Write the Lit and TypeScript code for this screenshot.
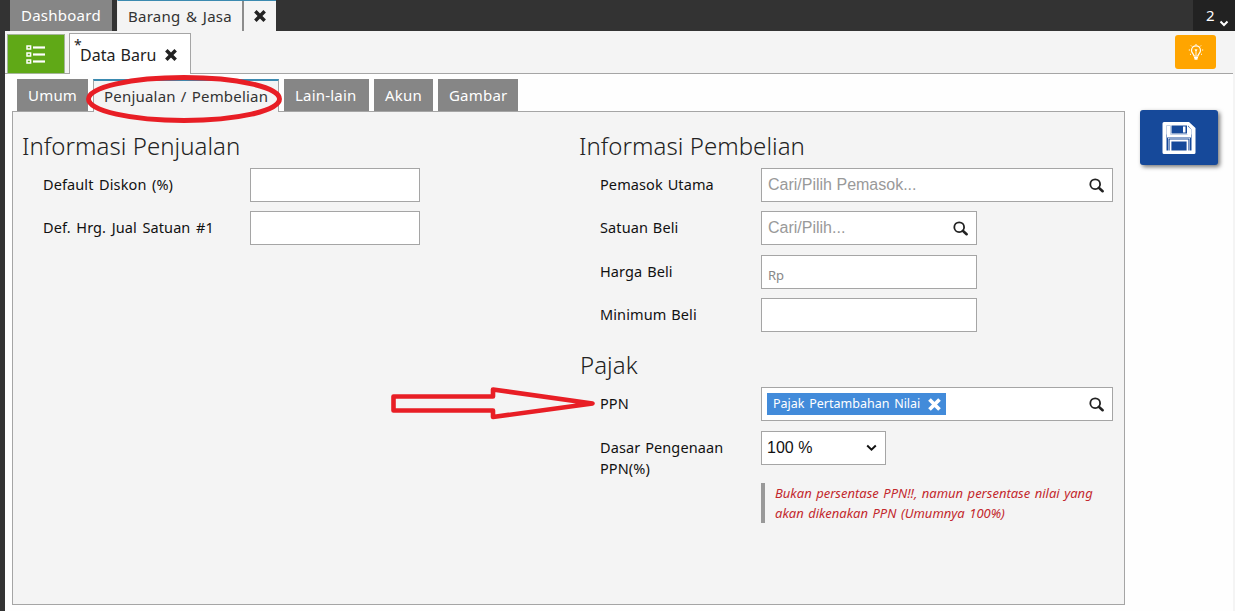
import { LitElement, html, css, svg } from "lit";
import { customElement } from "lit/decorators.js";

const searchIcon = html`<svg class="search" width="15" height="15" viewBox="0 0 15 15">
  <circle cx="6.2" cy="6.2" r="4.9" fill="none" stroke="#222" stroke-width="1.8" />
  <path d="M9.8 9.8 L13.6 13.2" stroke="#222" stroke-width="2.6" stroke-linecap="round" />
</svg>`;

const cross = (size: number, color: string) => html`<svg width=${size} height=${size} viewBox="0 0 12 12">
  <path d="M2 2 L10 10 M10 2 L2 10" stroke=${color} stroke-width="3" />
</svg>`;

@customElement("app-root")
export class AppRoot extends LitElement {
  static styles = css`
    :host {
      display: flex;
      flex-direction: column;
      position: relative;
      width: 1235px;
      height: 611px;
      overflow: hidden;
      background: #fefefe;
      color: #222;
      font: 15px/20px "Noto Sans", "Open Sans", sans-serif;
      white-space: nowrap;
    }
    * { box-sizing: border-box; }
    svg { display: block; flex: none; }
    .topbar { display: flex; height: 31px; background: #333; padding-left: 10px; flex: none; }
    .dash { width: 102px; background: #868686; color: #fff; padding: 5px 0 0 11px; letter-spacing: 0.25px; }
    .module { display: flex; width: 159px; margin-left: 5px; background: #f4f4f4; border-top: 1px solid #3b8ab0; border-left: 1px solid #eee; color: #333; }
    .module-name { width: 126px; padding: 5px 0 0 10px; border-right: 2px solid #8c8c8c; letter-spacing: 0.25px; word-spacing: 1.4px; }
    .module-close { display: flex; flex: 1; align-items: center; justify-content: center; }
    .count { display: flex; width: 42px; margin-left: auto; background: #222; color: #fff; padding: 5px 0 0 13px; }
    .count svg { margin: 15px 0 0 4px; }
    .body { display: flex; flex-direction: column; flex: 1; border-left: 5px solid #333; border-right: 2px solid #f4f4f4; }
    .docbar { display: flex; height: 43px; background: #f4f4f4; border-bottom: 1px solid #a5a5a5; padding-left: 2px; flex: none; }
    .list { display: flex; width: 58px; height: 40px; margin-top: 3px; background: #60a917; border: 1px solid #a5b59a; align-items: center; justify-content: center; }
    .doc { display: flex; position: relative; width: 122px; height: 41px; margin: 2px 0 0 4px; border: 1px solid #a5a5a5; border-bottom: 0; background: #fff; font-size: 16px; padding: 11px 0 0 10px; word-spacing: 1px; }
    .doc svg { margin: 3px 0 0 8px; }
    .star { position: absolute; left: 4px; top: 1px; font-size: 14px; }
    .tip { display: flex; width: 41px; height: 34px; margin: 4px 17px 0 auto; background: #ffa500; border-radius: 3px; align-items: center; justify-content: center; }
    .tabs { display: flex; gap: 5px; height: 37px; padding: 5px 0 0 12px; flex: none; color: #fff; }
    .tab { height: 32px; background: #868686; padding: 6px 0 0 11px; letter-spacing: 0.2px; }
    .umum { width: 71px; }
    .lain { width: 85px; }
    .akun { width: 59px; }
    .gambar { width: 80px; }
    .current { width: 186px; height: 33px; background: #f4f4f4; color: #333; border: 1px solid #a5a5a5; border-top: 2px solid #3b8ab0; border-bottom: 0; padding: 5px 0 0 10px; z-index: 1; word-spacing: 1px; }
    .content { display: flex; align-items: flex-start; }
    .panel { display: grid; grid-template-columns: 557px 1fr; width: 1113px; height: 494px; margin-left: 7px; border: 1px solid #a5a5a5; background: #f4f4f4; padding: 18px 0 0 10px; }
    .save { display: flex; width: 78px; height: 55px; margin: -1px 0 0 15px; border-radius: 3px; background: #16499a; box-shadow: 2px 2px 4px #777; align-items: center; justify-content: center; }
    h2 { margin: 0 0 0 -1px; height: 38px; font-size: 24px; line-height: 32px; font-weight: 300; color: #222; letter-spacing: 0.05px; }
    .row { display: flex; height: 34px; margin-bottom: 9.4px; padding-left: 20px; color: #111; }
    .label { padding-top: 6px; width: 161px; font-size: 14.5px; flex: none; letter-spacing: 0.1px; word-spacing: 1px; }
    .sales .label { width: 207px; word-spacing: 1.7px; }
    .field { display: flex; align-items: center; justify-content: space-between; height: 34px; border: 1px solid #a5a5a5; background: #fff; padding: 0 8px 0 6px; font: 16px/20px "Liberation Sans", sans-serif; color: #999; }
    .w170 { width: 170px; }
    .w216 { width: 216px; }
    .w352 { width: 352px; }
    .w125 { width: 125px; padding-left: 5px; color: #111; }
    .rp { font: 13px/20px "Noto Sans", sans-serif; padding-top: 7px; color: #888; }
    .tax { margin: 17px 0 0 0; }
    .chip { display: flex; width: 179px; height: 22px; align-items: center; background: #428bda; color: #fff; font: 12.5px/20px "Noto Sans", sans-serif; padding: 0 4px 0 6px; justify-content: space-between; margin-left: -1px; word-spacing: 1.5px; }
    .two { line-height: 21px; }
    .note { margin: 18px 0 0 181px; width: 345px; height: 40px; border-left: 4px solid #999; padding-left: 10px; color: #c3282d; font-size: 13px; font-style: italic; word-spacing: 1.1px; }
    .marks { position: absolute; left: 0; top: 0; pointer-events: none; z-index: 2; }
  `;

  private field(label: string, width: string, value: unknown = "", search = false) {
    return html`<div class="row"><div class="label">${label}</div>
      <div class="field ${width}"><span>${value}</span>${search ? searchIcon : ""}</div></div>`;
  }

  render() {
    return html`
      <div class="topbar">
        <div class="dash">Dashboard</div>
        <div class="module"><div class="module-name">Barang &amp; Jasa</div><div class="module-close">${cross(14, "#222")}</div></div>
        <div class="count">2<svg width="10" height="8" viewBox="0 0 10 8"><path d="M1.5 1.5 L5 5 L8.5 1.5" fill="none" stroke="#fff" stroke-width="2" /></svg></div>
      </div>
      <div class="body">
        <div class="docbar">
          <div class="list"><svg width="20" height="19" viewBox="0 0 20 19">
            ${[0, 7, 14].map((y) => svg`<rect x="1" y=${y + 1} width="3.6" height="3" fill="none" stroke="#fff" stroke-width="1.5" /><path d=${`M7 ${y + 2.5} H19`} stroke="#fff" stroke-width="2.2" />`)}
          </svg></div>
          <div class="doc"><span class="star">*</span>Data Baru${cross(14, "#222")}</div>
          <div class="tip"><svg width="16" height="17" viewBox="0 0 16 17" fill="none" stroke="#fff">
            <path d="M6 12 C6 10 3.5 9 3.5 6.4 A4.5 4.5 0 0 1 12.5 6.4 C12.5 9 10 10 10 12 Z" stroke-width="1.2" />
            <path d="M7 5 L8 7 L9 5 M8 6 V11" stroke-width="0.9" />
            <path d="M6 13.5 H10 M6.5 15 H9.5" stroke-width="1.7" />
            <path d="M8 0 V1 M3 1.5 L4 2.5 M13 1.5 L12 2.5 M0.8 6 H2 M14 6 H15.2 M2 10.5 L3 10 M14 10.5 L13 10" stroke-width="1" />
          </svg></div>
        </div>
        <div class="tabs">
          <div class="tab umum">Umum</div>
          <div class="tab current">Penjualan / Pembelian</div>
          <div class="tab lain">Lain-lain</div>
          <div class="tab akun">Akun</div>
          <div class="tab gambar">Gambar</div>
        </div>
        <div class="content">
          <div class="panel">
            <section class="sales">
              <h2>Informasi Penjualan</h2>
              ${this.field("Default Diskon (%)", "w170")}
              ${this.field("Def. Hrg. Jual Satuan #1", "w170")}
            </section>
            <section>
              <h2>Informasi Pembelian</h2>
              ${this.field("Pemasok Utama", "w352", "Cari/Pilih Pemasok...", true)}
              ${this.field("Satuan Beli", "w216", "Cari/Pilih...", true)}
              ${this.field("Harga Beli", "w216", html`<div class="rp">Rp</div>`)}
              ${this.field("Minimum Beli", "w216")}
              <h2 class="tax">Pajak</h2>
              ${this.field("PPN", "w352", html`<div class="chip">Pajak Pertambahan Nilai${cross(15, "#fff")}</div>`, true)}
              <div class="row">
                <div class="label two">Dasar Pengenaan<br />PPN(%)</div>
                <div class="field w125"><span>100 %</span><svg width="11" height="8" viewBox="0 0 11 8"><path d="M1.2 1.5 L5.5 5.6 L9.8 1.5" fill="none" stroke="#111" stroke-width="2" /></svg></div>
              </div>
              <div class="note">Bukan persentase PPN!!, namun persentase nilai yang<br />akan dikenakan PPN (Umumnya 100%)</div>
            </section>
          </div>
          <div class="save"><svg width="34" height="34" viewBox="0 0 34 34">
            <path fill="#fff" fill-rule="evenodd" d="M2 1 H27 L33.5 7 V31.5 Q33.5 33 32 33 H2 Q0.5 33 0.5 31.5 V2.5 Q0.5 1 2 1 Z M4.5 4.5 V29.5 H6 V17 H28 V29.5 H29.5 V8.5 L26 4.5 V13.5 H8.5 V4.5 Z" />
            <path fill="#16499a" d="M9.5 4.5 H25 V12.5 H9.5 Z M6.5 17.5 H27.5 V29.5 H6.5 Z" />
            <path fill="#fff" d="M21 5.5 H23.5 V11.5 H21 Z M5 13.5 H29 V16.5 H5 Z M4.5 4.5 H8.5 V13.5 H4.5 Z M25.5 5 L29.5 8.5 V13.5 H25.5 Z" />
            <path fill="none" stroke="#fff" stroke-width="1.8" d="M8.5 30 V19.5 H25.5 V30" />
          </svg></div>
        </div>
      </div>
      <svg class="marks" width="1235" height="611" viewBox="0 0 1235 611" fill="none" stroke="#e81e25" stroke-linejoin="round">
        <ellipse cx="184" cy="99" rx="95.5" ry="21.5" stroke-width="4.9" />
        <path d="M393.5 396.5 H493 V389.5 L592.5 403.5 L493 417 V410.5 H393.5 Z" stroke-width="4.6" />
      </svg>
    `;
  }
}
